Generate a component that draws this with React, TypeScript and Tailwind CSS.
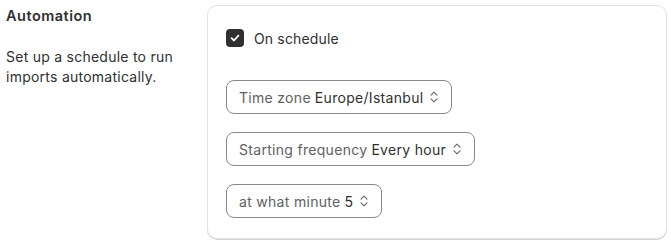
import React from "react";

function Chevrons() {
  return (
    <svg width="10" height="14" viewBox="0 0 10 14" fill="none" className="ml-[6px] shrink-0">
      <path d="M2 5.2 L5 2.2 L8 5.2" stroke="#6b6b6b" strokeWidth="1.2" strokeLinecap="round" strokeLinejoin="round" />
      <path d="M2 8.8 L5 11.8 L8 8.8" stroke="#6b6b6b" strokeWidth="1.2" strokeLinecap="round" strokeLinejoin="round" />
    </svg>
  );
}

function Select({ label, value }: { label: string; value: string }) {
  return (
    <div className="flex">
      <div className="flex h-[34px] items-center rounded-[8px] border border-[#8a8a8a] bg-white pl-[12px] pr-[12px] text-[14px] tracking-[0.3px]">
        <span className="text-[#616161]">{label}</span>
        <span className="ml-[4px] text-[#303030]">{value}</span>
        <Chevrons />
      </div>
    </div>
  );
}

export default function App() {
  return (
    <div
      className="flex h-[243px] w-[671px] bg-white"
      style={{ fontFamily: "Inter, 'Noto Sans', sans-serif" }}
    >
      <div className="w-[207px] shrink-0 pl-[6px] pt-[6px]">
        <div className="text-[14.5px] font-semibold leading-[20px] tracking-[0.5px] text-[#303030]">Automation</div>
        <div className="mt-[21px] w-[190px] text-[14px] leading-[20px] tracking-[0.25px] text-[#303030]">
          Set up a schedule to run<br />imports automatically.
        </div>
      </div>
      <div className="mt-[5px] mb-[4px] mr-[4px] flex flex-1 flex-col rounded-[10px] border border-[#e3e3e3] bg-white px-[18px] pt-[22px] shadow-[0_1px_0_0_#d4d4d4]">
        <div className="flex h-[20px] items-center">
          <div className="flex h-[18px] w-[18px] items-center justify-center rounded-[4px] bg-[#303030]">
            <svg width="12" height="12" viewBox="0 0 12 12" fill="none">
              <path d="M2.6 6.2 L5 8.5 L9.4 3.6" stroke="white" strokeWidth="1.8" strokeLinecap="round" strokeLinejoin="round" />
            </svg>
          </div>
          <span className="ml-[10px] text-[14px] tracking-[0.15px] text-[#303030]">On schedule</span>
        </div>
        <div className="mt-[32px] flex flex-col gap-[18px]">
          <Select label="Time zone" value="Europe/Istanbul" />
          <Select label="Starting frequency" value="Every hour" />
          <Select label="at what minute" value="5" />
        </div>
      </div>
    </div>
  );
}
